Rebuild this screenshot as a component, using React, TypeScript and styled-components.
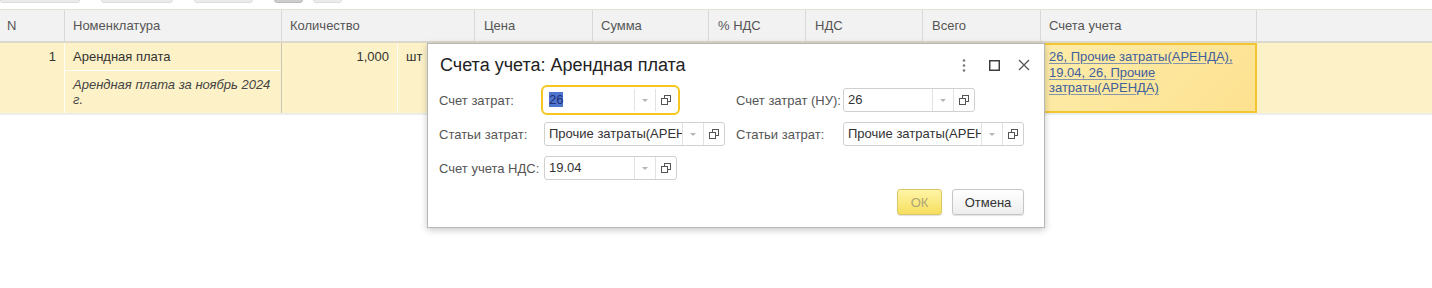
import React from 'react'
import styled, { createGlobalStyle } from 'styled-components'

const GlobalStyle = createGlobalStyle`
  html,
  body {
    margin: 0;
    padding: 0;
    background: #fff;
  }

  body {
    font-family: "Liberation Sans", Arial, sans-serif;
    font-size: 13px;
    color: #333;
  }

  * {
    box-sizing: border-box;
  }
`

const COLS = '65px 217px 116px 77px 118px 116px 97px 117px 118px 216px 1fr'

const Page = styled.div`
  position: relative;
  width: 1432px;
  height: 288px;
  overflow: hidden;
  background: #fff;
`

const Toolbar = styled.div`
  display: flex;
  align-items: flex-end;
  height: 3px;
  overflow: hidden;
  margin-bottom: 6px;
`

const ToolButton = styled.div<{ $w: number; $ml: number; $dark?: boolean }>`
  flex: none;
  width: ${p => p.$w}px;
  height: 20px;
  margin-left: ${p => p.$ml}px;
  border-radius: 0 0 3px 3px;
  background: ${p => (p.$dark ? '#cdcdcd' : '#ebebeb')};
  border: 1px solid ${p => (p.$dark ? '#bcbcbc' : '#dddddd')};
`

const HeaderRow = styled.div`
  display: grid;
  grid-template-columns: ${COLS};
  height: 34px;
  background: #f2f2f2;
  border-top: 1px solid #e3e0d4;
  border-bottom: 2px solid #dcd9cc;
`

const HeaderCell = styled.div<{ $span?: number; $pl?: number }>`
  grid-column: span ${p => p.$span || 1};
  display: flex;
  align-items: center;
  padding-left: ${p => (p.$pl !== undefined ? p.$pl : 8)}px;
  border-right: 1px solid #d9d9d9;
  color: #555;
  white-space: nowrap;

  &:last-child {
    border-right: none;
  }
`

const Row = styled.div`
  display: grid;
  grid-template-columns: ${COLS};
  height: 72px;
  background: #fdf2c7;
  border-bottom: 2px solid #ededed;
`

const Cell = styled.div<{ $line?: string; $align?: 'left' | 'right' }>`
  padding: 0 8px;
  line-height: 27px;
  text-align: ${p => p.$align || 'left'};
  border-right: 1px solid ${p => p.$line || 'rgba(255, 255, 255, 0.85)'};
  color: #333;
  white-space: nowrap;
`

const NameCell = styled.div`
  display: flex;
  flex-direction: column;
  border-right: 1px solid #c9c6b8;
`

const NameMain = styled.div`
  height: 28px;
  line-height: 27px;
  padding: 0 8px;
  border-bottom: 1px solid rgba(255, 255, 255, 0.9);
`

const NameDesc = styled.div`
  padding: 6px 8px 0 8px;
  line-height: 15px;
  font-style: italic;
  color: #444;
`

const AccountCell = styled.div`
  border: 2px solid #f3c631;
  background: linear-gradient(135deg, #fdeca9 0%, #fde190 100%);
  padding: 4px 6px;
  line-height: 15.5px;
`

const AccountLink = styled.a`
  color: #40609e;
  text-decoration: underline;
  text-decoration-color: #8593ab;
  text-underline-offset: 2px;
  cursor: pointer;
`

const Dialog = styled.div`
  position: absolute;
  left: 427px;
  top: 43px;
  width: 618px;
  background: #fff;
  border: 1px solid #b7b7b7;
  box-shadow: 0 2px 7px rgba(0, 0, 0, 0.22);
  padding: 0 20px 12px 11px;
`

const DialogHeader = styled.div`
  display: flex;
  align-items: center;
  height: 42px;
  margin-right: -15px;
`

const DialogTitle = styled.div`
  padding-left: 1px;
  font-size: 18px;
  color: #222;
`

const HeaderIcons = styled.div`
  display: flex;
  margin-left: auto;
`

const IconButton = styled.div`
  width: 30px;
  height: 30px;
  display: flex;
  align-items: center;
  justify-content: center;
`

const Form = styled.div`
  display: flex;
  flex-direction: column;
  gap: 10px;
  margin-top: 2px;
`

const FormRow = styled.div`
  display: flex;
  gap: 11px;
`

const Field = styled.div<{ $w?: number }>`
  display: flex;
  align-items: center;
  width: ${p => (p.$w ? `${p.$w}px` : 'auto')};
`

const Label = styled.div<{ $w: number }>`
  flex: none;
  width: ${p => p.$w}px;
  color: #555;
  white-space: nowrap;
`

const InputBox = styled.div<{ $w: number; $focus?: boolean }>`
  flex: none;
  display: flex;
  width: ${p => p.$w}px;
  height: 24px;
  border: 1px solid ${p => (p.$focus ? '#ffffff' : '#d0d0d0')};
  border-radius: 3px;
  background: #fff;
  outline: ${p => (p.$focus ? '2px solid #f6c61e' : 'none')};
  outline-offset: 1px;
`

const InputValue = styled.div`
  flex: 1;
  min-width: 0;
  padding-left: 4px;
  line-height: 22px;
  overflow: hidden;
  white-space: nowrap;
  color: #333;
`

const Selected = styled.span`
  background: #4f74cf;
  color: #1e2f72;
`

const InputPart = styled.div`
  flex: none;
  width: 21px;
  display: flex;
  align-items: center;
  justify-content: center;
  border-left: 1px solid #e2e2e2;
`

const Arrow = styled.div`
  width: 0;
  height: 0;
  border-left: 3px solid transparent;
  border-right: 3px solid transparent;
  border-top: 3px solid #b5b5b5;
`

const Buttons = styled.div`
  display: flex;
  justify-content: flex-end;
  gap: 10px;
  margin-top: 9px;
`

const Button = styled.div<{ $w: number; $primary?: boolean }>`
  width: ${p => p.$w}px;
  height: 26px;
  display: flex;
  align-items: center;
  justify-content: center;
  border-radius: 3px;
  border: 1px solid ${p => (p.$primary ? '#dcc768' : '#c6c6c6')};
  background: ${p =>
    p.$primary
      ? 'linear-gradient(#fff5a6, #f5df5e)'
      : 'linear-gradient(#ffffff, #ededed)'};
  box-shadow: 0 1px 1px rgba(0, 0, 0, 0.12);
  color: ${p => (p.$primary ? '#aea477' : '#333')};
`

const OpenIcon = () => (
  <svg width="10" height="10" viewBox="0 0 10 10">
    <rect x="3.5" y="0.5" width="6" height="6" fill="#fff" stroke="#555" />
    <rect x="0.5" y="3.5" width="6" height="6" fill="#fff" stroke="#555" />
  </svg>
)

interface InputProps {
  width: number
  focus?: boolean
  children: React.ReactNode
}

const Input = ({ width, focus, children }: InputProps) => (
  <InputBox $w={width} $focus={focus}>
    <InputValue>{children}</InputValue>
    <InputPart>
      <Arrow />
    </InputPart>
    <InputPart>
      <OpenIcon />
    </InputPart>
  </InputBox>
)

const headers = [
  { title: 'N', pl: 7 },
  { title: 'Номенклатура' },
  { title: 'Количество', span: 2 },
  { title: 'Цена', pl: 9 },
  { title: 'Сумма' },
  { title: '% НДС', pl: 9 },
  { title: 'НДС', pl: 9 },
  { title: 'Всего', pl: 9 },
  { title: 'Счета учета' },
  { title: '' },
]

const tools = [
  { w: 80, ml: 0 },
  { w: 72, ml: 21 },
  { w: 59, ml: 21 },
  { w: 29, ml: 21, dark: true },
  { w: 29, ml: 10 },
]

export default function App() {
  return (
    <Page>
      <GlobalStyle />
      <Toolbar>
        {tools.map((t, i) => (
          <ToolButton key={i} $w={t.w} $ml={t.ml} $dark={t.dark} />
        ))}
      </Toolbar>
      <HeaderRow>
        {headers.map((h, i) => (
          <HeaderCell key={i} $span={h.span} $pl={h.pl}>
            {h.title}
          </HeaderCell>
        ))}
      </HeaderRow>
      <Row>
        <Cell $align="right">1</Cell>
        <NameCell>
          <NameMain>Арендная плата</NameMain>
          <NameDesc>Арендная плата за ноябрь 2024 г.</NameDesc>
        </NameCell>
        <Cell $align="right">1,000</Cell>
        <Cell>шт</Cell>
        <Cell />
        <Cell />
        <Cell />
        <Cell />
        <Cell />
        <AccountCell>
          <AccountLink>
            26, Прочие затраты(АРЕНДА),
            <br />
            19.04, 26, Прочие
            <br />
            затраты(АРЕНДА)
          </AccountLink>
        </AccountCell>
        <div />
      </Row>

      <Dialog>
        <DialogHeader>
          <DialogTitle>Счета учета: Арендная плата</DialogTitle>
          <HeaderIcons>
            <IconButton>
              <svg width="4" height="13" viewBox="0 0 4 13">
                <circle cx="2" cy="1.5" r="1.3" fill="#7a7a7a" />
                <circle cx="2" cy="6.5" r="1.3" fill="#7a7a7a" />
                <circle cx="2" cy="11.5" r="1.3" fill="#7a7a7a" />
              </svg>
            </IconButton>
            <IconButton>
              <svg width="11" height="11" viewBox="0 0 11 11">
                <rect x="0.75" y="0.75" width="9.5" height="9.5" fill="none" stroke="#333" strokeWidth="1.4" />
              </svg>
            </IconButton>
            <IconButton>
              <svg width="12" height="12" viewBox="0 0 12 12">
                <path d="M1 1 L11 11 M11 1 L1 11" stroke="#555" strokeWidth="1.3" />
              </svg>
            </IconButton>
          </HeaderIcons>
        </DialogHeader>

        <Form>
          <FormRow>
            <Field $w={286}>
              <Label $w={105}>Счет затрат:</Label>
              <Input width={133} focus>
                <Selected>26</Selected>
              </Input>
            </Field>
            <Field>
              <Label $w={107}>Счет затрат (НУ):</Label>
              <Input width={132}>26</Input>
            </Field>
          </FormRow>
          <FormRow>
            <Field $w={286}>
              <Label $w={105}>Статьи затрат:</Label>
              <Input width={181}>Прочие затраты(АРЕНДА)</Input>
            </Field>
            <Field>
              <Label $w={107}>Статьи затрат:</Label>
              <Input width={181}>Прочие затраты(АРЕНДА)</Input>
            </Field>
          </FormRow>
          <FormRow>
            <Field $w={286}>
              <Label $w={105}>Счет учета НДС:</Label>
              <Input width={133}>19.04</Input>
            </Field>
          </FormRow>
        </Form>

        <Buttons>
          <Button $w={45} $primary>
            ОК
          </Button>
          <Button $w={72}>Отмена</Button>
        </Buttons>
      </Dialog>
    </Page>
  )
}
